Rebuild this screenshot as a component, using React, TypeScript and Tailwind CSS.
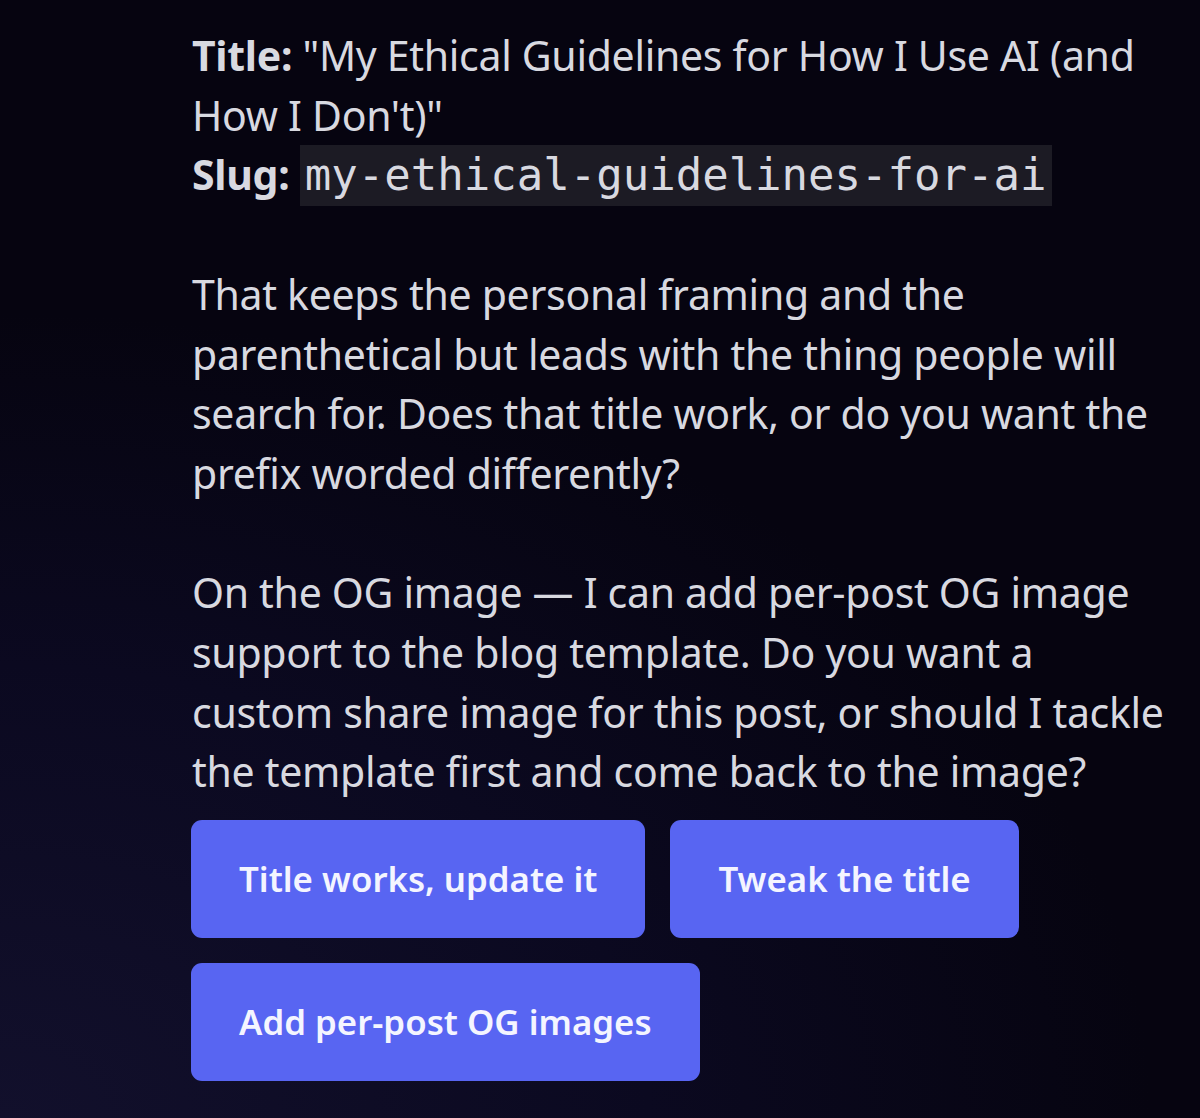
import React from "react";

export default function App() {
  const body = { fontFamily: '"Noto Sans", "Open Sans", sans-serif' };
  return (
    <div
      className="w-[1200px] h-[1118px] overflow-hidden bg-[#060410] bg-[radial-gradient(ellipse_120%_90%_at_0%_100%,#12102c_0%,#0b0920_45%,#060410_80%)]"
      style={body}
    >
      <div className="pl-[192px] pt-[26px] text-[#d8d9e0] text-[41px] leading-[59.7px] tracking-[-0.3px]">
        <div>
          <span className="font-bold">Title:</span> "My Ethical Guidelines for How I Use AI (and
          <br />
          How I Don't)"
          <br />
          <span className="font-bold">Slug:</span>{" "}
          <code
            className="bg-[#1c1b24] px-[5px] pt-[4px] pb-[6px] text-[44px] tracking-normal"
            style={{ fontFamily: '"DejaVu Sans Mono", "Liberation Mono", monospace' }}
          >
            my-ethical-guidelines-for-ai
          </code>
        </div>
        <div className="mt-[59.7px]">
          That keeps the personal framing and the
          <br />
          parenthetical but leads with the thing people will
          <br />
          search for. Does that title work, or do you want the
          <br />
          prefix worded differently?
        </div>
        <div className="mt-[59.7px]">
          On the OG image — I can add per-post OG image
          <br />
          support to the blog template. Do you want a
          <br />
          custom share image for this post, or should I tackle
          <br />
          the template first and come back to the image?
        </div>
        <div className="mt-[18px] flex flex-col gap-[25px] -ml-px tracking-normal">
          <div className="flex gap-[25px]">
            <button className="h-[118px] px-[48px] rounded-[11px] bg-[#5865f2] text-[#f4f5ff] text-[34.8px] font-semibold leading-none">
              Title works, update it
            </button>
            <button className="h-[118px] px-[48px] rounded-[11px] bg-[#5865f2] text-[#f4f5ff] text-[34.8px] font-semibold leading-none">
              Tweak the title
            </button>
          </div>
          <div className="flex">
            <button className="h-[118px] px-[48px] rounded-[11px] bg-[#5865f2] text-[#f4f5ff] text-[34.8px] font-semibold leading-none">
              Add per-post OG images
            </button>
          </div>
        </div>
      </div>
    </div>
  );
}
